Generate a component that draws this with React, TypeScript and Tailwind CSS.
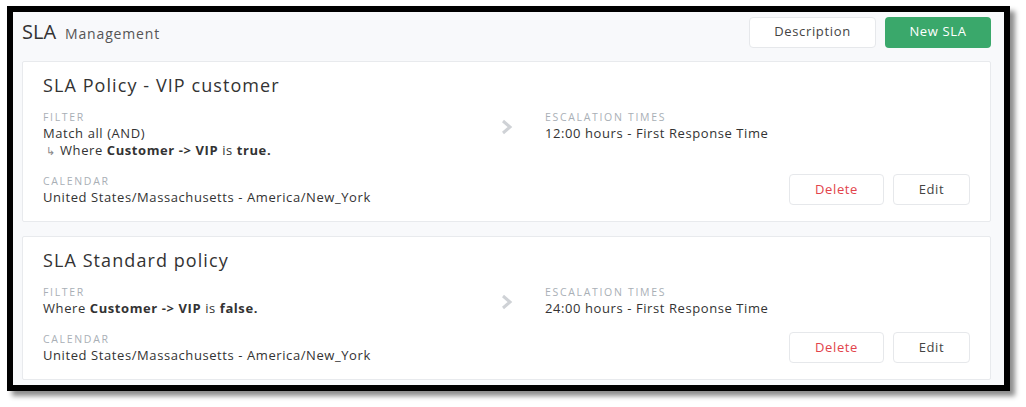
import React from "react";

const font = { fontFamily: '"Open Sans", "Noto Sans", sans-serif' };

function Chevron() {
  return (
    <svg width="14" height="16" viewBox="0 0 14 16" className="block">
      <path d="M3 2 L10 8 L3 14" fill="none" stroke="#cfd2d6" strokeWidth="3" strokeLinejoin="miter" />
    </svg>
  );
}

function Label({ children }: { children: React.ReactNode }) {
  return <div className="text-[10.5px] leading-[16px] tracking-[0.16em] uppercase text-[#a9afb6]">{children}</div>;
}

const body = "text-[13px] leading-[17px] tracking-[0.045em] text-[#333]";

function Card({ title, filter, time }: { title: string; filter: React.ReactNode; time: string }) {
  return (
    <div className="bg-white border border-[#e8eaed] rounded-[2px] pl-[20px] pr-[20px] pt-[11px] pb-[15px]">
      <div className="text-[18px] leading-[24px] tracking-[0.06em] text-[#333]">{title}</div>
      <div className="flex mt-[12px]">
        <div className="w-[457px]">
          <Label>Filter</Label>
          <div className={body}>{filter}</div>
        </div>
        <div className="w-[45px] pt-[10px]">
          <Chevron />
        </div>
        <div className="flex-1">
          <Label>Escalation Times</Label>
          <div className={body}>{time}</div>
        </div>
      </div>
      <div className="flex items-center mt-[14px]">
        <div className="flex-1">
          <Label>Calendar</Label>
          <div className={body}>United States/Massachusetts - America/New_York</div>
        </div>
        <div className="flex gap-[9px]">
          <button className="w-[95px] h-[31px] bg-white border border-[#e6e8eb] rounded-[4px] text-[13px] tracking-[0.05em] text-[#e2434b]">Delete</button>
          <button className="w-[77px] h-[31px] bg-white border border-[#e6e8eb] rounded-[4px] text-[13px] tracking-[0.05em] text-[#444]">Edit</button>
        </div>
      </div>
    </div>
  );
}

export default function App() {
  return (
    <div className="w-[1026px] h-[407px] bg-white relative" style={font}>
      <div className="absolute left-[7px] top-[6px] w-[1003px] h-[385px] border-[6px] border-black shadow-[5px_5px_5px_rgba(0,0,0,0.45)]">
        <div className="w-full h-full bg-[#f8f9fb] pl-[9px] pr-[13px] pt-[5px] overflow-hidden">
          <div className="flex items-center h-[30px]">
            <div className="flex items-baseline gap-[9px] flex-1">
              <span className="text-[20px] text-[#333]">SLA</span>
              <span className="text-[14px] tracking-[0.06em] text-[#555]">Management</span>
            </div>
            <button className="w-[127px] h-[31px] bg-white border border-[#e6e8eb] rounded-[4px] text-[13px] tracking-[0.05em] text-[#444] mr-[9px]">Description</button>
            <button className="w-[106px] h-[31px] bg-[#3aa86b] rounded-[4px] text-[13px] tracking-[0.05em] text-white">New SLA</button>
          </div>
          <div className="mt-[14px] flex flex-col gap-[14px]">
            <Card
              title="SLA Policy - VIP customer"
              filter={
                <>
                  <div>Match all (AND)</div>
                  <div className="h-[17px]">
                    <span className="text-[#888] text-[11px] leading-[0]">&nbsp;↳</span> Where <b>Customer -&gt; VIP</b> is <b>true.</b>
                  </div>
                </>
              }
              time="12:00 hours - First Response Time"
            />
            <Card
              title="SLA Standard policy"
              filter={
                <div>
                  Where <b>Customer -&gt; VIP</b> is <b>false.</b>
                </div>
              }
              time="24:00 hours - First Response Time"
            />
          </div>
        </div>
      </div>
    </div>
  );
}
